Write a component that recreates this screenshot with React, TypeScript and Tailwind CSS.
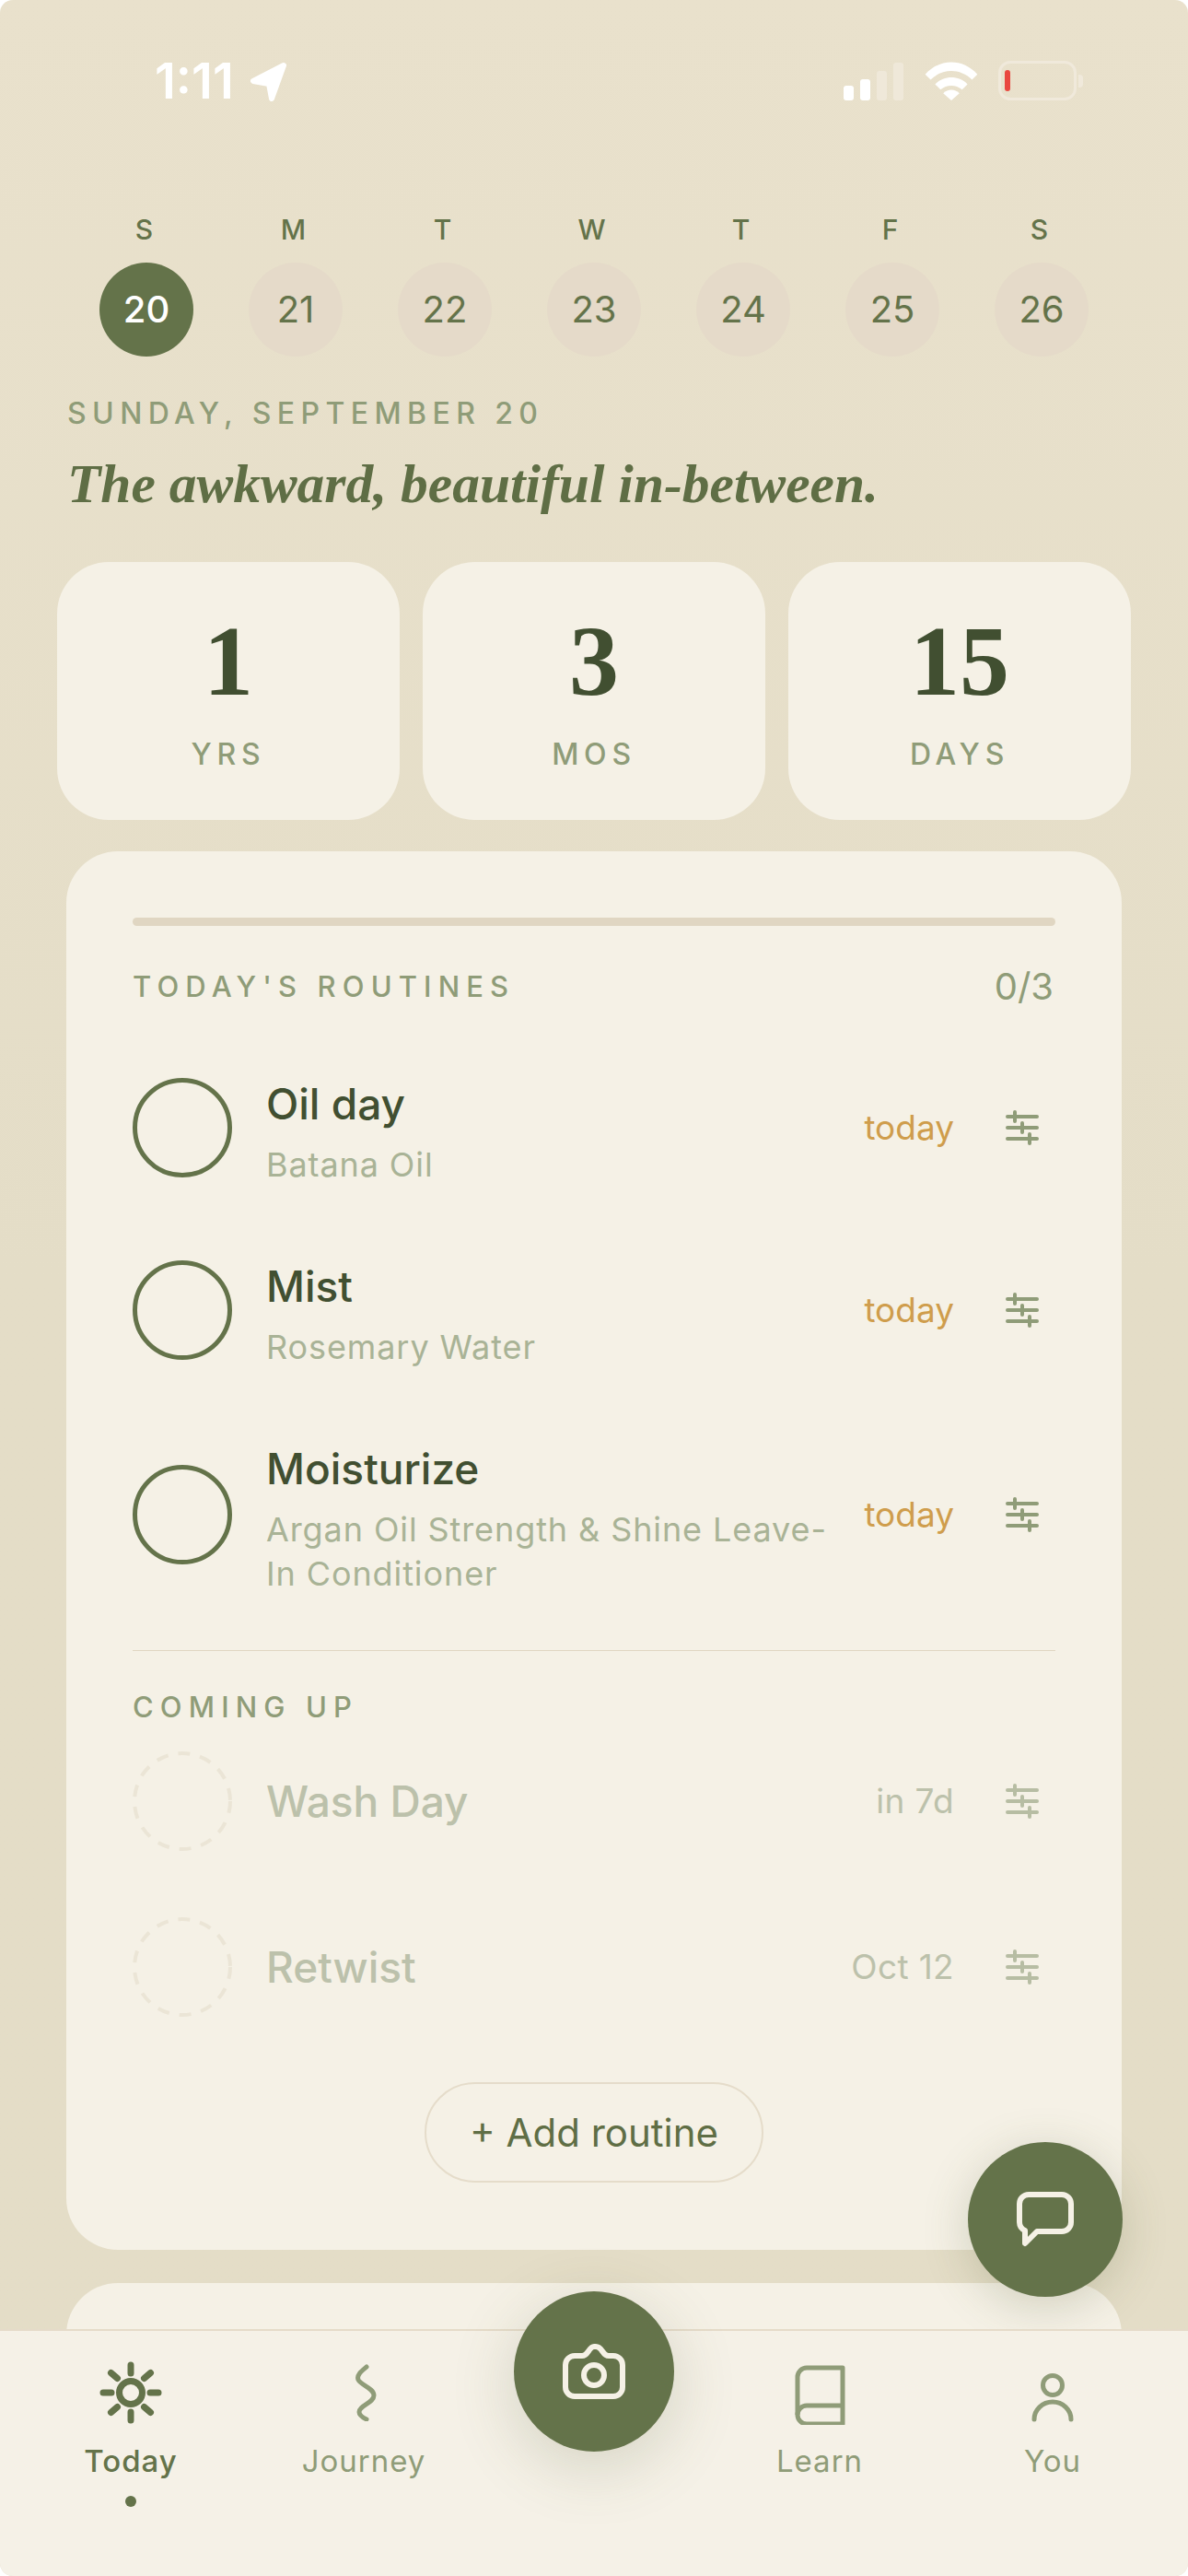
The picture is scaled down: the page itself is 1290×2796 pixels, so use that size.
import type { ReactNode } from "react";

const days = [
  { letter: "S", num: 20, active: true },
  { letter: "M", num: 21 },
  { letter: "T", num: 22 },
  { letter: "W", num: 23 },
  { letter: "T", num: 24 },
  { letter: "F", num: 25 },
  { letter: "S", num: 26 },
];

const stats = [
  { value: "1", label: "YRS" },
  { value: "3", label: "MOS" },
  { value: "15", label: "DAYS" },
];

function Sliders({ className }: { className?: string }) {
  return (
    <svg width="40" height="40" viewBox="0 0 40 40" className={className} fill="none" stroke="#8f9c78" strokeWidth="4" strokeLinecap="round">
      <path d="M4 8h32M4 20h32M4 32h32" />
      <path d="M12 3v10M20 15v10M28 27v10" />
    </svg>
  );
}

function StatusBar() {
  return (
    <div className="flex h-[231px] items-start justify-between pl-[168px] pr-[114px] pt-[60px]">
      <div className="flex items-center gap-[16px]">
        <span className="w-[86px] text-[54px] leading-[56px] font-semibold whitespace-nowrap text-white">1:11</span>
        <svg width="44" height="44" viewBox="0 0 44 44" fill="white" stroke="white" strokeWidth="6" strokeLinejoin="round">
          <path d="M38 5 5 22l17 3 3 16z" />
        </svg>
      </div>
      <div className="flex items-end pt-[6px]">
        <div className="flex items-end gap-[7px]">
          <div className="h-[16px] w-[11px] rounded-[3px] bg-white" />
          <div className="h-[23px] w-[11px] rounded-[3px] bg-white" />
          <div className="h-[32px] w-[11px] rounded-[3px] bg-[#efe8d9]" />
          <div className="h-[41px] w-[11px] rounded-[3px] bg-[#efe8d9]" />
        </div>
        <svg className="ml-[23px]" width="58" height="42" viewBox="0 0 58 43" fill="white">
          <path d="M0 14C16-4 42-4 58 14l-6 6C39 7 19 7 6 20z" />
          <path d="M11 25c10-10 26-10 36 0l-6 6c-7-6-17-6-24 0z" />
          <path d="M20 35c5-5 13-5 18 0l-9 8z" />
        </svg>
        <div className="ml-[22px] flex items-center">
          <div className="flex h-[43px] w-[85px] items-center rounded-[13px] border-[3px] border-[#f0e9db] pl-[4px]">
            <div className="h-[23px] w-[6px] rounded-[3px] bg-[#e9473f]" />
          </div>
          <div className="ml-[2px] h-[14px] w-[5px] rounded-r-[4px] bg-[#f0e9db]" />
        </div>
      </div>
    </div>
  );
}

function RoutineRow({ title, sub }: { title: string; sub: string }) {
  return (
    <div className="flex items-center">
      <div className="h-[108px] w-[108px] shrink-0 rounded-full border-[5px] border-[#64734a]" />
      <div className="ml-[37px] flex-1 pr-[20px]">
        <div className="-mt-[2px] text-[46px] leading-[60px] font-medium text-[#414f31]">{title}</div>
        <div className="mt-[12px] -mb-[10px] text-[36px] leading-[48px] tracking-[0.025em] text-[#a9b396]">{sub}</div>
      </div>
      <span className="text-[37px] leading-[48px] text-[#cf9d4c]">today</span>
      <Sliders className="mr-[16px] ml-[54px]" />
    </div>
  );
}

function UpcomingRow({ title, when }: { title: string; when: string }) {
  return (
    <div className="flex items-center">
      <svg width="108" height="108" viewBox="0 0 108 108" fill="none" className="shrink-0">
        <circle cx="54" cy="54" r="52" stroke="#ebe5d6" strokeWidth="4" strokeDasharray="13 11" />
      </svg>
      <div className="ml-[37px] flex-1 text-[46px] leading-[60px] font-medium text-[#bcc1ab]">{title}</div>
      <span className="text-[37px] leading-[48px] tracking-[0.01em] text-[#bcc1ab]">{when}</span>
      <Sliders className="mr-[16px] ml-[54px] opacity-60" />
    </div>
  );
}

function TabItem({ label, icon, active }: { label: string; icon: ReactNode; active?: boolean }) {
  return (
    <div className="flex flex-col items-center">
      <div className="flex h-[70px] items-center justify-center">{icon}</div>
      <span className={`mt-[18px] text-[33px] leading-[42px] tracking-[0.03em] ${active ? "font-medium text-[#64734a]" : "text-[#8f9c78]"}`}>{label}</span>
      {active && <div className="mt-[17px] h-[12px] w-[12px] rounded-full bg-[#64734a]" />}
    </div>
  );
}

function SunIcon() {
  return (
    <svg width="70" height="70" viewBox="0 0 70 70" fill="none" stroke="#64734a" strokeLinecap="round">
      <circle cx="35" cy="35" r="12.5" strokeWidth="7" />
      <path strokeWidth="7" d="M35 5v9M35 56v9M5 35h9M56 35h9M13.5 13.5l7 6M56.500 13.500l-7 6M13.500 56.500l7-6M56.500 56.500l-7-6" />
    </svg>
  );
}

function JourneyIcon() {
  return (
    <svg width="36" height="62" viewBox="0 0 36 62" fill="none" stroke="#8f9c78" strokeWidth="5" strokeLinecap="round">
      <path d="M21 3C15 8 10 12 12 17c3 6 17 9 17 17 0 8-16 11-16 18 0 3 4 6 8 8" />
    </svg>
  );
}

function BookIcon() {
  return (
    <svg width="56" height="70" viewBox="0 0 56 70" fill="none" stroke="#8f9c78" strokeWidth="5" strokeLinejoin="round">
      <path d="M53 8H14A10 10 0 0 0 4 18v41a10 10 0 0 0 10 10h39z" />
      <path d="M4 59a10 10 0 0 1 10-10h39" />
    </svg>
  );
}

function PersonIcon() {
  return (
    <svg width="48" height="70" viewBox="0 0 48 70" fill="none" stroke="#8f9c78" strokeWidth="5" strokeLinecap="round">
      <circle cx="24" cy="27" r="10.500" />
      <path d="M4 64a20 19 0 0 1 40 0" />
    </svg>
  );
}

export default function App() {
  return (
    <div className="relative h-[2796px] w-[1290px] overflow-hidden rounded-[14px] bg-gradient-to-b from-[#e9e1cc] via-[#e4ddc7] to-[#e4ddc7] font-['Inter',sans-serif]">
      <StatusBar />

      {/* Week strip */}
      <div className="grid grid-cols-7 px-[78px]">
        {days.map((d, i) => (
          <div key={i} className="flex flex-col items-center">
            <span className="pr-[5px] text-[30px] leading-[36px] font-medium text-[#64734a]">{d.letter}</span>
            <div
              className={`mt-[18px] flex h-[102px] w-[102px] items-center justify-center rounded-full text-[40px] ${
                d.active ? "bg-[#64734a] font-medium text-white" : "bg-[#e5dac9] text-[#64734a]"
              }`}
            >
              {d.num}
            </div>
          </div>
        ))}
      </div>

      <div className="mt-[46px] pl-[73px] text-[32px] leading-[32px] font-medium tracking-[0.2em] text-[#8f9c78]">SUNDAY, SEPTEMBER 20</div>
      <div className="mt-[25px] pl-[73px] font-['Liberation_Serif',serif] text-[59.5px] leading-[70px] font-bold text-[#5f6e45] italic">The awkward, beautiful in-between.</div>

      {/* Age counter */}
      <div className="mt-[50px] grid grid-cols-3 gap-[25px] px-[62px]">
        {stats.map((s) => (
          <div key={s.label} className="flex h-[280px] flex-col items-center rounded-[56px] bg-[#f5f1e6] pt-[53px]">
            <span className="font-['Liberation_Serif',serif] text-[108px] leading-[110px] font-bold text-[#414f31]">{s.value}</span>
            <span className="mt-[26px] text-[32px] leading-[40px] font-medium tracking-[0.18em] text-[#8f9c78]">{s.label}</span>
          </div>
        ))}
      </div>

      {/* Routines card */}
      <div className="mx-[72px] mt-[34px] rounded-[56px] bg-[#f5f1e6] px-[72px] pt-[72px] pb-[73px]">
        <div className="h-[9px] rounded-full bg-[#e0d6c2]" />
        <div className="mt-[41px] flex h-[50px] items-center justify-between pr-[2px]">
          <span className="text-[31px] font-medium tracking-[0.23em] text-[#8f9c78]">TODAY'S ROUTINES</span>
          <span className="text-[40px] text-[#8f9c78]">0/3</span>
        </div>
        <div className="mt-[74px] flex flex-col gap-[90px]">
          <RoutineRow title="Oil day" sub="Batana Oil" />
          <RoutineRow title="Mist" sub="Rosemary Water" />
          <RoutineRow title="Moisturize" sub="Argan Oil Strength & Shine Leave-In Conditioner" />
        </div>
        <div className="mt-[69px] h-[1px] bg-[#e0d6c2]" />
        <div className="mt-[41px] text-[31px] leading-[40px] font-medium tracking-[0.23em] text-[#8f9c78]">COMING UP</div>
        <div className="mt-[28px] flex flex-col gap-[72px]">
          <UpcomingRow title="Wash Day" when="in 7d" />
          <UpcomingRow title="Retwist" when="Oct 12" />
        </div>
        <div className="mt-[71px] flex justify-center">
          <div className="flex h-[109px] w-[368px] items-center justify-center rounded-full border-[2px] border-[#e5dcca] text-[42px] text-[#5f6e45]">+ Add routine</div>
        </div>
      </div>

      {/* Next card, cut off by the tab bar */}
      <div className="mx-[72px] mt-[36px] h-[200px] rounded-[56px] bg-[#f5f1e6]" />

      {/* Chat button */}
      <div className="absolute top-[2325px] left-[1051px] flex h-[168px] w-[168px] items-center justify-center rounded-full bg-[#64734a] shadow-[0_10px_50px_rgba(80,90,50,0.22)]">
        <svg width="62" height="60" viewBox="0 0 62 60" fill="none" stroke="#f5f1e6" strokeWidth="6" strokeLinejoin="round" strokeLinecap="round">
          <path d="M13 3h36a10 10 0 0 1 10 10v20a10 10 0 0 1-10 10H22L9 56V42a10 10 0 0 1-6-9V13A10 10 0 0 1 13 3z" />
        </svg>
      </div>

      {/* Tab bar */}
      <div className="absolute inset-x-0 bottom-0 grid h-[268px] grid-cols-[284px_222px_278px_212px_294px] border-t-[2px] border-[#e5dbc9] bg-[#f5f1e7] pt-[32px]">
        <TabItem label="Today" active icon={<SunIcon />} />
        <TabItem label="Journey" icon={<JourneyIcon />} />
        <div className="relative">
          <div className="absolute -top-[75px] left-[52px] flex h-[174px] w-[174px] items-center justify-center rounded-full bg-[#64734a] shadow-[0_16px_70px_rgba(80,90,50,0.2)]">
            <svg width="70" height="62" viewBox="0 0 70 62" fill="none" stroke="#f5f1e6" strokeWidth="6" strokeLinejoin="round">
              <path d="M14 14h8c3 0 5-2 7-5 2-3 4-5 6-5h2c3 0 5 2 7 5 2 3 4 5 7 5h5a10 10 0 0 1 10 10v24a10 10 0 0 1-10 10H14A10 10 0 0 1 4 48V24a10 10 0 0 1 10-10z" />
              <circle cx="35" cy="35" r="11" />
            </svg>
          </div>
        </div>
        <TabItem label="Learn" icon={<BookIcon />} />
        <TabItem label="You" icon={<PersonIcon />} />
      </div>
    </div>
  );
}
